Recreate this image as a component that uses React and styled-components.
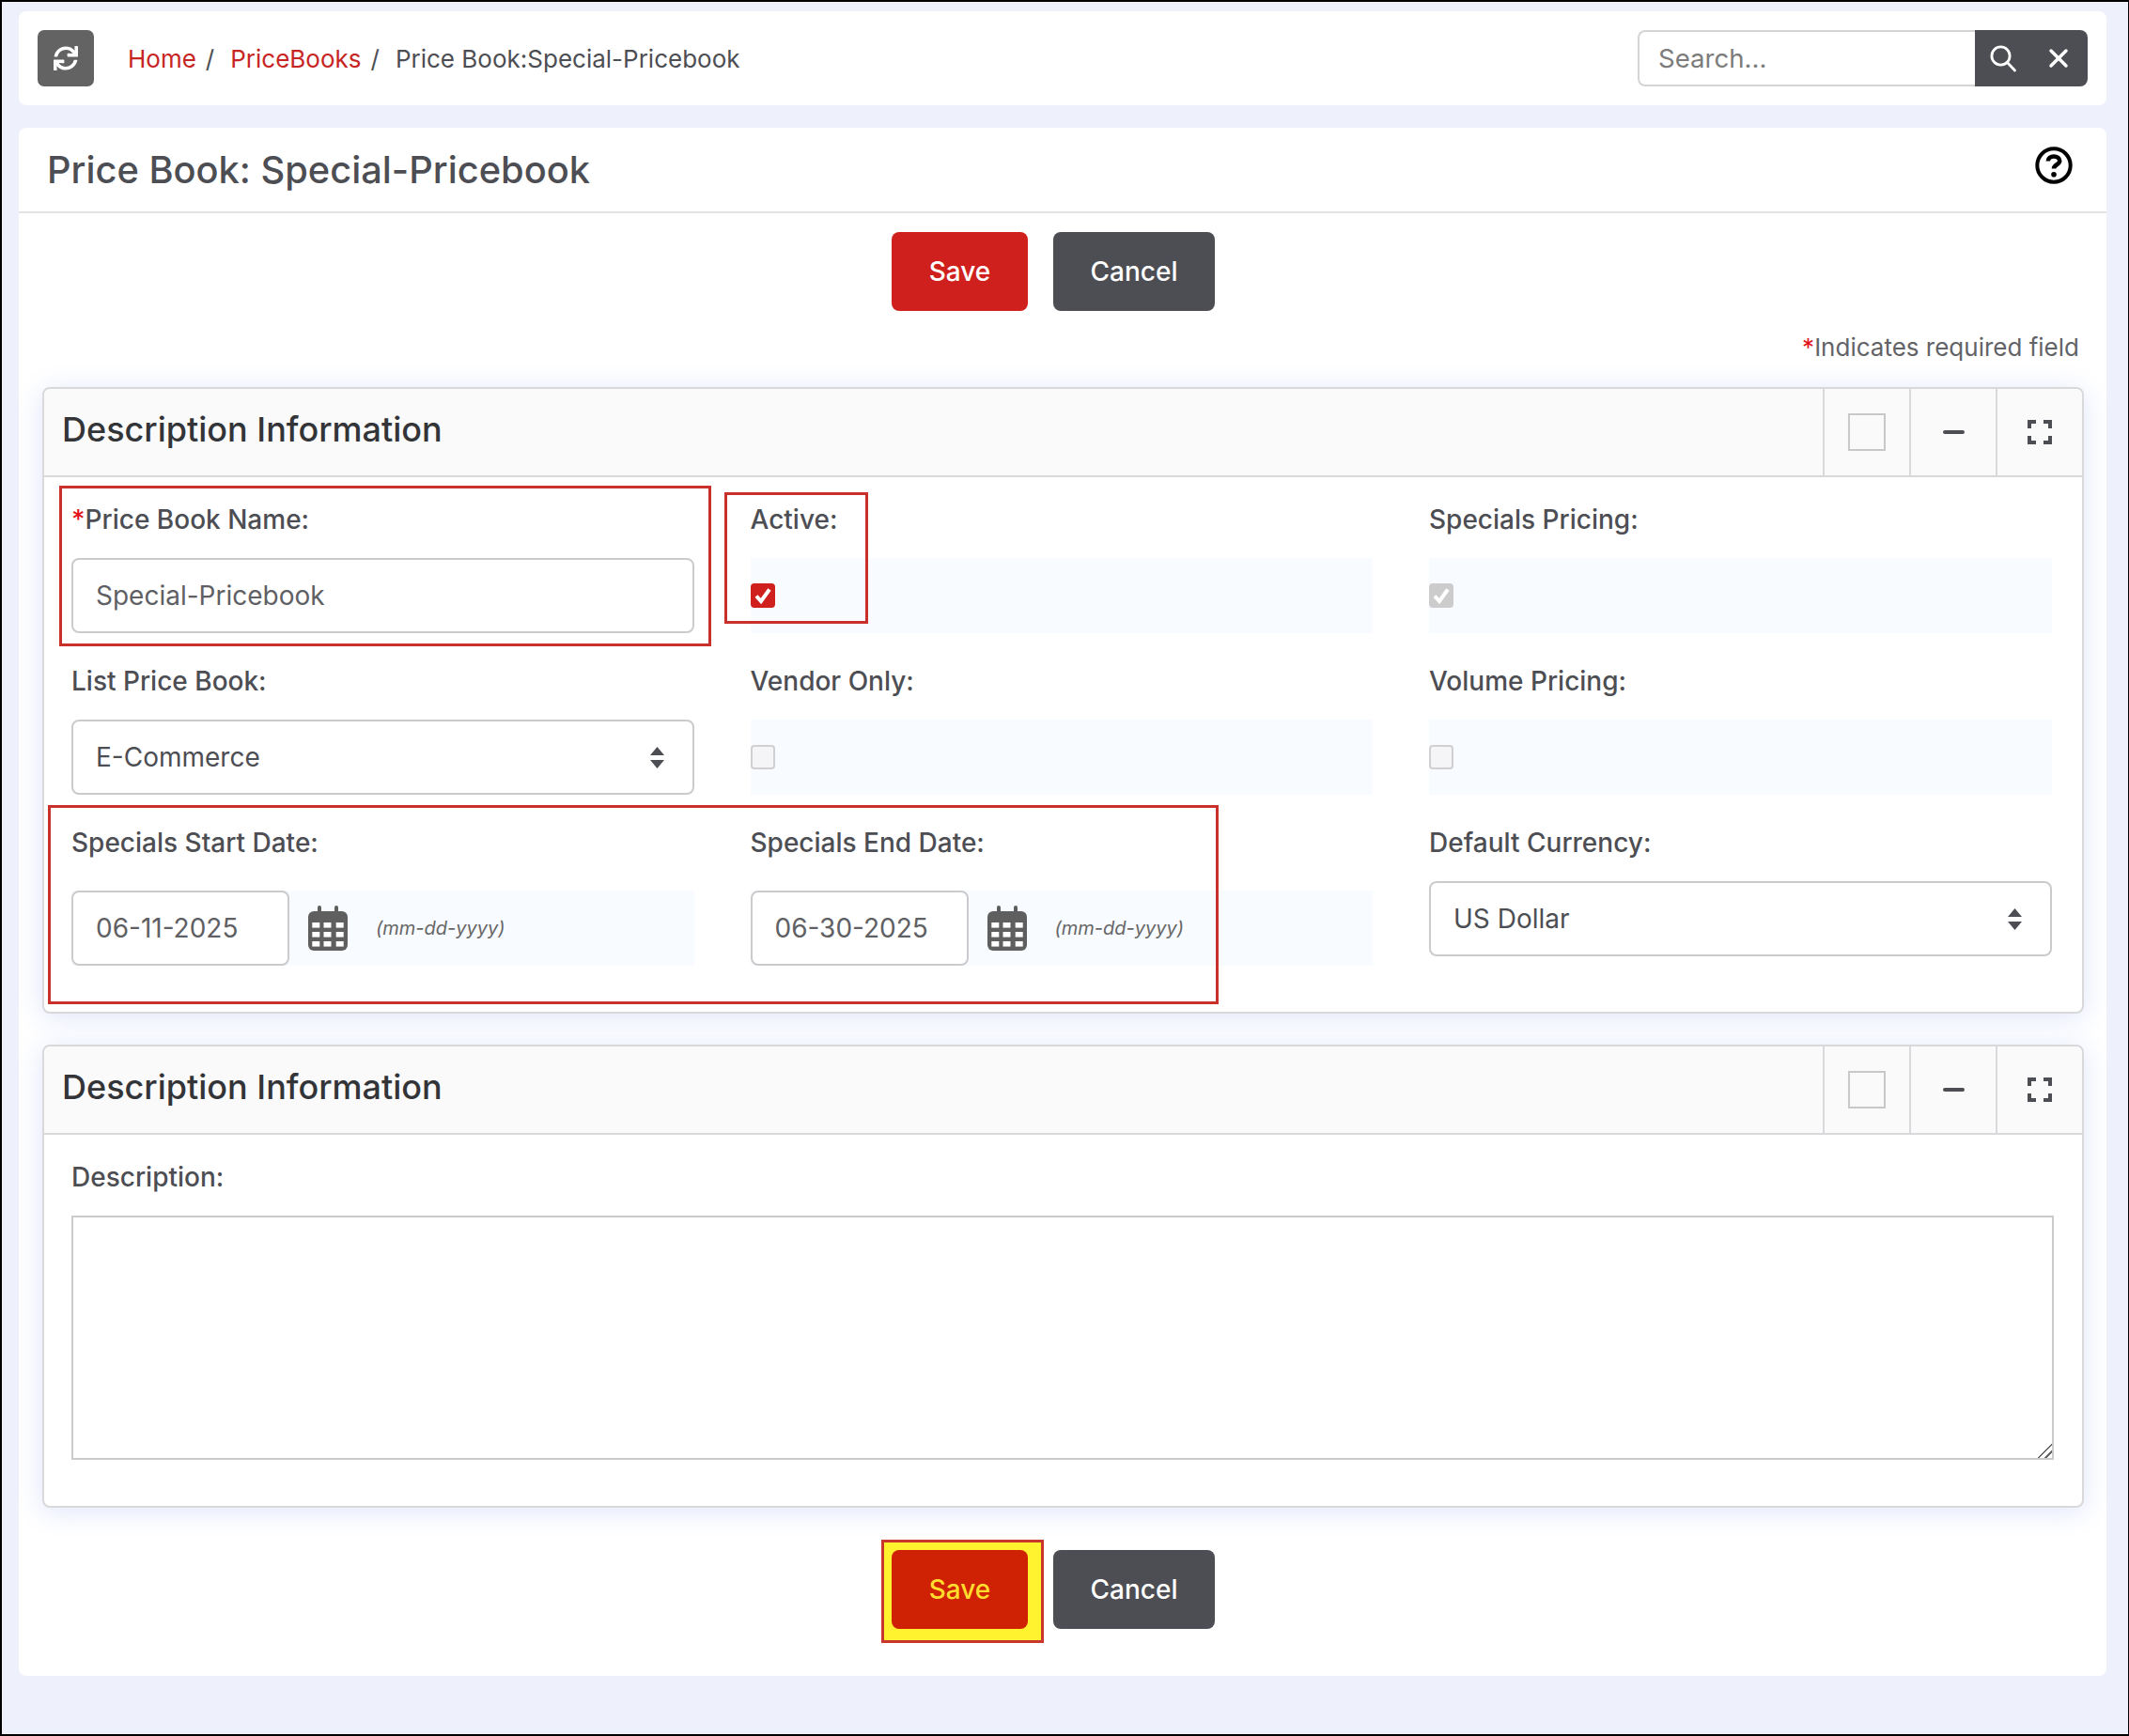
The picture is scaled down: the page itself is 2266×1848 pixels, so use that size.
import React from 'react';
import styled, { createGlobalStyle } from 'styled-components';
import { FaSync } from 'react-icons/fa';
import { X } from 'lucide-react';

const GlobalStyle = createGlobalStyle`
  html, body {
    margin: 0;
    padding: 0;
    background: #000;
  }
  * {
    box-sizing: border-box;
  }
  body {
    font-family: Inter, "Liberation Sans", sans-serif;
    color: #4d4e53;
  }
`;

const SearchIcon = () => (
  <svg width="30" height="30" viewBox="0 0 30 30" fill="none" stroke="#fff" strokeWidth="2.8">
    <circle cx="12.5" cy="12.5" r="9.6" />
    <path d="M19.5 19.5L27.5 28" strokeLinecap="round" />
  </svg>
);

const ExpandIcon = () => (
  <svg width="26" height="26" viewBox="0 0 26 26" fill="none" stroke="#4d4e53" strokeWidth="4">
    <path d="M2 9V2h7M17 2h7v7M24 17v7h-7M9 24H2v-7" />
  </svg>
);

const HelpIcon = () => (
  <svg width="40" height="40" viewBox="0 0 40 40" fill="none" stroke="#000">
    <circle cx="20" cy="20" r="17.7" strokeWidth="4" />
    <path d="M13.8 15.5c0-3 2.8-5 6.2-5s6.2 2 6.2 4.8c0 4-6.2 4-6.2 8.2" strokeWidth="4.6" />
    <circle cx="20" cy="29.8" r="2.8" fill="#000" stroke="none" />
  </svg>
);

const SortArrows = () => (
  <svg width="15" height="23" viewBox="0 0 15 23" fill="#4d4e53">
    <path d="M7.5 0L15 9H0zM7.5 23L0 14h15z" />
  </svg>
);

const CalendarIcon = () => (
  <svg width="42" height="48" viewBox="0 0 42 48" fill="#5f5f5f">
    <rect x="10" y="0" width="4" height="10" rx="2" />
    <rect x="28" y="0" width="4" height="10" rx="2" />
    <rect x="0" y="6" width="42" height="42" rx="6" />
    <g fill="#fff">
      {[18, 28, 38].map((y) =>
        [4.3, 16.5, 29.7].map((x) => <rect key={`${x}-${y}`} x={x} y={y} width="8" height="5.6" />)
      )}
    </g>
  </svg>
);

const CheckMark = () => (
  <svg width="26" height="26" viewBox="0 0 26 26" fill="none" stroke="#fff" strokeWidth="4">
    <path d="M6 13.5l5 5.5 9-12.5" />
  </svg>
);

const Button = ({ children, $variant }) => <Btn $variant={$variant}>{children}</Btn>;

const Field = ({ label, required, children }) => (
  <FieldWrap>
    <Label>
      {required && <Star>*</Star>}
      {label}
    </Label>
    {children}
  </FieldWrap>
);

const DateCell = ({ value }) => (
  <DateBand>
    <DateInput defaultValue={value} readOnly />
    <CalendarIcon />
    <Hint>(mm-dd-yyyy)</Hint>
  </DateBand>
);

const PanelHeader = ({ title }) => (
  <PanelHead>
    <PanelTitle>{title}</PanelTitle>
    <Tool>
      <ToolSquare />
    </Tool>
    <Tool>
      <ToolDash />
    </Tool>
    <Tool>
      <ExpandIcon />
    </Tool>
  </PanelHead>
);

const App = () => {
  return (
    <>
      <GlobalStyle />
      <Frame>
        <TopBar>
          <RefreshBtn>
            <FaSync size={26} color="#fff" />
          </RefreshBtn>
          <Crumbs>
            <CrumbLink>Home</CrumbLink>
            <Slash>/</Slash>
            <CrumbLink>PriceBooks</CrumbLink>
            <Slash>/</Slash>
            <span>Price Book:Special-Pricebook</span>
          </Crumbs>
          <SearchBox>
            <SearchInput placeholder="Search..." />
            <SearchActions>
              <SearchIcon />
              <X size={32} color="#fff" strokeWidth={2.6} />
            </SearchActions>
          </SearchBox>
        </TopBar>

        <Card>
          <CardHead>
            <CardTitle>Price Book: Special-Pricebook</CardTitle>
            <HelpSlot>
              <HelpIcon />
            </HelpSlot>
          </CardHead>

          <ButtonBar>
            <Button $variant="save">Save</Button>
            <Button>Cancel</Button>
          </ButtonBar>

          <RequiredNote>
            <Star>*</Star>Indicates required field
          </RequiredNote>

          <Panel>
            <PanelHeader title="Description Information" />
            <PanelBody>
              <Annotation $left={16} $top={9} $width={694} $height={171} />
              <Annotation $left={724} $top={16} $width={153} $height={140} />
              <Annotation $left={4} $top={349} $width={1246} $height={212} />
              <FieldGrid>
                <Field label="Price Book Name:" required>
                  <TextInput defaultValue="Special-Pricebook" readOnly />
                </Field>
                <Field label="Active:">
                  <CheckBand>
                    <Check $state="on">
                      <CheckMark />
                    </Check>
                  </CheckBand>
                </Field>
                <Field label="Specials Pricing:">
                  <CheckBand>
                    <Check $state="disabled">
                      <CheckMark />
                    </Check>
                  </CheckBand>
                </Field>

                <Field label="List Price Book:">
                  <SelectBox>
                    E-Commerce
                    <SortArrows />
                  </SelectBox>
                </Field>
                <Field label="Vendor Only:">
                  <CheckBand>
                    <Check />
                  </CheckBand>
                </Field>
                <Field label="Volume Pricing:">
                  <CheckBand>
                    <Check />
                  </CheckBand>
                </Field>

                <Field label="Specials Start Date:">
                  <DateCell value="06-11-2025" />
                </Field>
                <Field label="Specials End Date:">
                  <DateCell value="06-30-2025" />
                </Field>
                <Field label="Default Currency:">
                  <SelectBox>
                    US Dollar
                    <SortArrows />
                  </SelectBox>
                </Field>
              </FieldGrid>
            </PanelBody>
          </Panel>

          <SecondPanel>
            <PanelHeader title="Description Information" />
            <PanelBody>
              <Label>Description:</Label>
              <DescriptionArea />
            </PanelBody>
          </SecondPanel>

          <BottomBar>
            <HighlightWrap>
              <SaveHighlight />
              <Button $variant="highlight">Save</Button>
            </HighlightWrap>
            <Button>Cancel</Button>
          </BottomBar>
        </Card>
      </Frame>
    </>
  );
};

const Frame = styled.div`
  width: 2266px;
  height: 1848px;
  padding: 10px 23px 0 18px;
  background: #eef1fb;
  border-style: solid;
  border-color: #000;
  border-width: 2px 1px 2px 2px;
  overflow: hidden;
`;

const TopBar = styled.div`
  display: flex;
  align-items: center;
  height: 100px;
  padding: 0 20px;
  background: #fff;
  border-radius: 8px;
`;

const RefreshBtn = styled.div`
  display: flex;
  align-items: center;
  justify-content: center;
  width: 60px;
  height: 60px;
  background: #636363;
  border-radius: 7px;
`;

const Crumbs = styled.div`
  display: flex;
  align-items: center;
  margin-left: 36px;
  font-size: 26px;
  color: #4d4e53;
`;

const CrumbLink = styled.span`
  color: #c72424;
`;

const Slash = styled.span`
  margin: 0 17px 0 10px;
`;

const SearchBox = styled.div`
  display: flex;
  margin-left: auto;
  height: 60px;
`;

const SearchInput = styled.input`
  width: 359px;
  height: 60px;
  padding: 0 20px;
  font: 400 27.6px Inter, sans-serif;
  color: #4d4e53;
  background: #fff;
  border: 2px solid #d5d5d5;
  border-right: 0;
  border-radius: 8px 0 0 8px;
  outline: none;

  &::placeholder {
    color: #7c7c7c;
    opacity: 1;
  }
`;

const SearchActions = styled.div`
  display: flex;
  align-items: center;
  gap: 28px;
  width: 120px;
  padding-left: 15px;
  background: #4d4e53;
  border-radius: 0 8px 8px 0;
`;

const Card = styled.div`
  margin-top: 24px;
  padding-bottom: 50px;
  background: #fff;
  border-radius: 8px;
`;

const CardHead = styled.div`
  display: flex;
  align-items: center;
  justify-content: space-between;
  height: 91px;
  padding: 0 36px 0 30px;
  border-bottom: 2px solid #e4e4e6;
`;

const CardTitle = styled.h1`
  margin: 0;
  font-size: 39.8px;
  font-weight: 500;
  color: #4d4e53;
`;

const HelpSlot = styled.div`
  display: flex;
  margin-bottom: 10px;
`;

const ButtonBar = styled.div`
  display: flex;
  justify-content: center;
  gap: 27px;
  margin-top: 20px;
  padding-right: 20px;
`;

const BottomBar = styled(ButtonBar)`
  margin-top: 45px;
`;

const Btn = styled.button`
  height: 84px;
  padding: 0;
  width: ${(p) => (p.$variant ? '145px' : '172px')};
  font: 500 28px Inter, sans-serif;
  border: 0;
  border-radius: 8px;
  color: ${(p) => (p.$variant === 'highlight' ? '#ffdc2e' : '#fff')};
  background: ${(p) =>
    p.$variant === 'save' ? '#cf201d' : p.$variant === 'highlight' ? '#cf2204' : '#4d4e53'};
`;

const HighlightWrap = styled.div`
  position: relative;
  display: flex;

  ${Btn} {
    position: relative;
  }
`;

const SaveHighlight = styled.div`
  position: absolute;
  top: -11px;
  left: -11px;
  width: 173px;
  height: 110px;
  background: #fff22f;
  border: 3px solid #c9362e;
`;

const RequiredNote = styled.div`
  margin: 22px 29px 0 0;
  line-height: 34px;
  font-size: 26px;
  text-align: right;
  color: #626367;
`;

const Star = styled.span`
  color: #e3121a;
`;

const Panel = styled.section`
  margin: 25px 24px 0 25px;
  background: #fff;
  border: 2px solid #d9d9dc;
  border-radius: 8px;
  box-shadow: 0 4px 28px rgba(80, 110, 230, 0.18);
`;

const SecondPanel = styled(Panel)`
  margin-top: 33px;
`;

const PanelHead = styled.div`
  display: flex;
  align-items: stretch;
  height: 94px;
  background: #fafafa;
  border-bottom: 2px solid #d9d9dc;
  border-radius: 8px 8px 0 0;
`;

const PanelTitle = styled.h2`
  flex: 1;
  align-self: center;
  margin: 0 0 7px 19px;
  font-size: 36px;
  font-weight: 500;
  color: #333438;
`;

const Tool = styled.div`
  display: flex;
  align-items: center;
  justify-content: center;
  width: 92px;
  border-left: 2px solid #d9d9dc;
`;

const ToolSquare = styled.div`
  width: 40px;
  height: 40px;
  border: 2px solid #c8c8c8;
`;

const ToolDash = styled.div`
  width: 23px;
  height: 4px;
  background: #4d4e53;
  border-radius: 2px;
`;

const PanelBody = styled.div`
  position: relative;
  padding: 28px 30px 49px 29px;
`;

const Annotation = styled.div`
  position: absolute;
  left: ${(p) => p.$left}px;
  top: ${(p) => p.$top}px;
  width: ${(p) => p.$width}px;
  height: ${(p) => p.$height}px;
  border: 3px solid #c9302c;
  pointer-events: none;
`;

const FieldGrid = styled.div`
  display: grid;
  grid-template-columns: repeat(3, 662.5px);
  column-gap: 60px;
  row-gap: 34px;
`;

const FieldWrap = styled.div`
  display: flex;
  flex-direction: column;
`;

const Label = styled.div`
  height: 34px;
  margin-bottom: 24px;
  line-height: 34px;
  font-size: 28px;
  font-weight: 500;
  color: #4d4e53;
`;

const inputLook = `
  height: 80px;
  font: 400 28px Inter, sans-serif;
  color: #5f6064;
  background: #fff;
  border: 2px solid #cbcbcd;
  border-radius: 8px;
  outline: none;
`;

const TextInput = styled.input`
  ${inputLook}
  width: 100%;
  padding: 0 24px;
`;

const SelectBox = styled.div`
  ${inputLook}
  display: flex;
  align-items: center;
  justify-content: space-between;
  padding: 0 30px 0 24px;
  color: #4d4e53;
`;

const CheckBand = styled.div`
  display: flex;
  align-items: center;
  height: 80px;
  background: #f8fbff;
`;

const Check = styled.span`
  display: flex;
  width: 26px;
  height: 26px;
  border-radius: 4px;
  border: ${(p) => (p.$state ? '0' : '2px solid #d0d0d3')};
  background: ${(p) =>
    p.$state === 'on' ? '#cf201d' : p.$state === 'disabled' ? '#cccccc' : '#f5f5f7'};
`;

const DateBand = styled.div`
  display: flex;
  align-items: center;
  height: 80px;
  margin-top: 10px;
  background: #f8fbff;
`;

const DateInput = styled.input`
  ${inputLook}
  width: 232px;
  margin-right: 20px;
  padding: 0 24px;
`;

const Hint = styled.span`
  margin-left: 30px;
  font-size: 20px;
  font-style: italic;
  color: #666;
`;

const DescriptionArea = styled.textarea`
  display: block;
  width: 100%;
  height: 260px;
  background: #fff;
  border: 2px solid #cbcbcd;
  border-radius: 0;
  outline: none;
  resize: vertical;

  &::-webkit-resizer {
    background: linear-gradient(
      135deg,
      transparent 48%,
      #666 48%,
      #666 56%,
      transparent 56%,
      transparent 72%,
      #666 72%,
      #666 80%,
      transparent 80%
    );
  }
`;

export default App;
